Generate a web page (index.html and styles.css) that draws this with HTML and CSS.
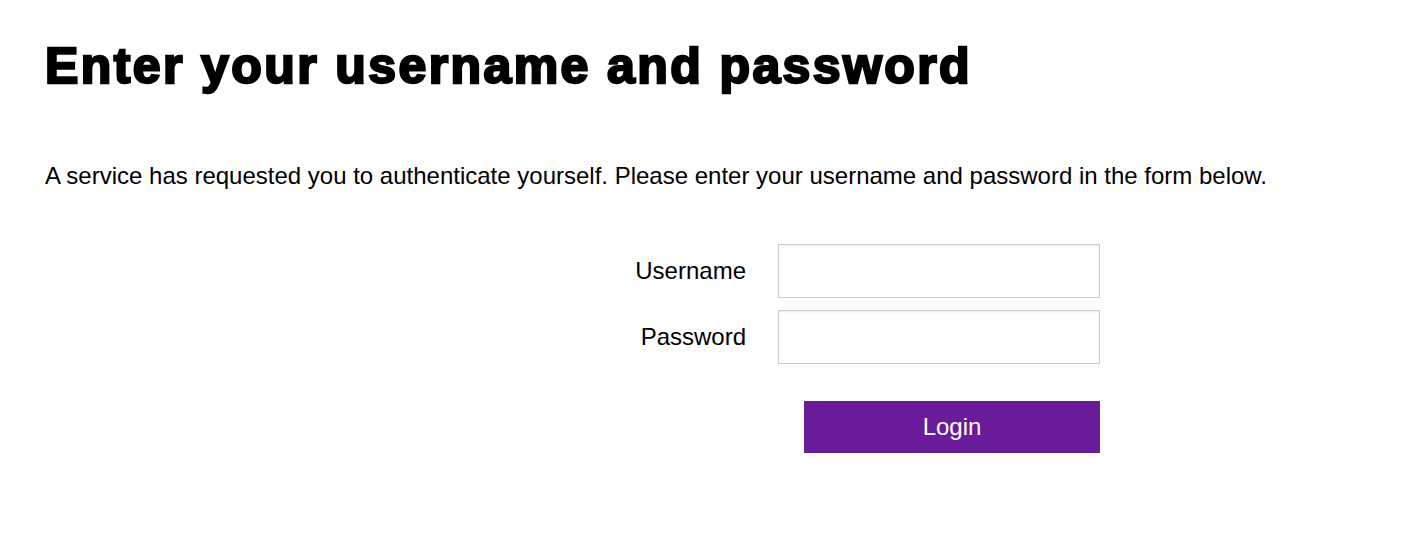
FILE: index.html
```html
<!DOCTYPE html>
<html>
<head>
<meta charset="utf-8">
<link rel="stylesheet" href="styles.css">
</head>
<body>
<div class="page">
  <h1 class="title">Enter your username and password</h1>
  <p class="intro">A service has requested you to authenticate yourself. Please enter your username and password in the form below.</p>
  <form class="login-form">
    <div class="fields">
      <label class="label" for="u">Username</label>
      <input class="field" id="u" type="text">
      <label class="label" for="p">Password</label>
      <input class="field" id="p" type="password">
    </div>
    <div class="actions">
      <button class="btn" type="button">Login</button>
    </div>
  </form>
</div>
</body>
</html>
```
FILE: styles.css
```css
html, body { margin: 0; padding: 0; background: #fff; }
body { font-family: "Liberation Sans", Arial, sans-serif; color: #000; }
.page { padding: 0 45px; }
.title {
  margin: 0;
  padding-top: 38px;
  font-size: 50px;
  line-height: 56px;
  font-weight: 700;
  -webkit-text-stroke: 2.4px #000;
  letter-spacing: 2.4px;
}
.intro {
  margin: 68px 0 0 0;
  font-size: 24px;
  line-height: 28px;
}
.login-form { margin-top: 54px; margin-left: 546px; width: 509px; }
.fields {
  display: grid;
  grid-template-columns: 155px 322px;
  column-gap: 32px;
  row-gap: 12px;
  align-items: center;
}
.label { text-align: right; font-size: 24px; }
.field {
  box-sizing: border-box;
  height: 54px;
  width: 322px;
  border: 1px solid #ccc;
  box-shadow: inset 0 1px 2px rgba(0,0,0,0.08);
  margin: 0;
  padding: 0 8px;
  font-size: 20px;
}
.actions { display: flex; justify-content: flex-end; margin-top: 37px; }
.btn {
  width: 296px;
  height: 52px;
  background: #6a1b9a;
  color: #fff;
  border: 0;
  font-family: "Liberation Sans", Arial, sans-serif;
  font-size: 24px;
  padding: 0;
}
```
